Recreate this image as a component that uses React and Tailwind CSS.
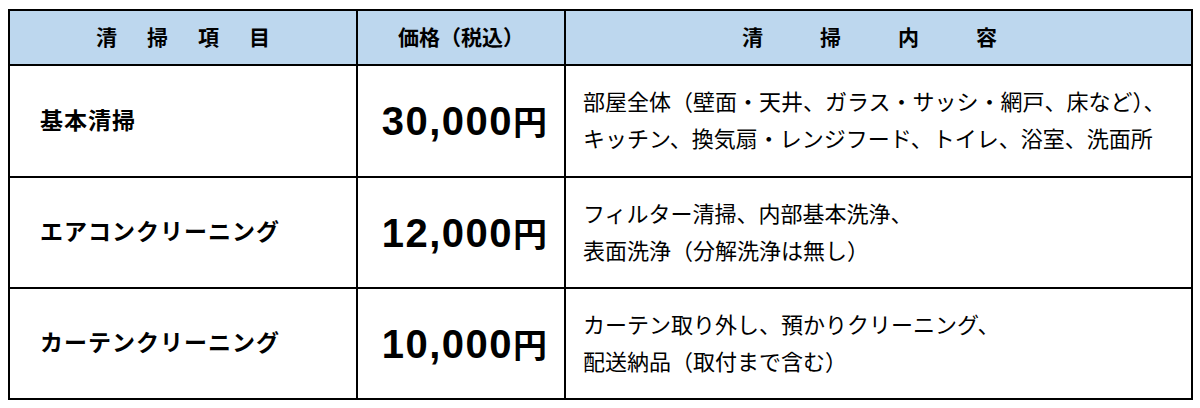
const rows = [
  {
    name: "基本清掃",
    price: "30,000",
    lines: ["部屋全体（壁面・天井、ガラス・サッシ・網戸、床など）、", "キッチン、換気扇・レンジフード、トイレ、浴室、洗面所"],
    h: "h-[112px]",
  },
  {
    name: "エアコンクリーニング",
    price: "12,000",
    lines: ["フィルター清掃、内部基本洗浄、", "表面洗浄（分解洗浄は無し）"],
    h: "h-[111px]",
  },
  {
    name: "カーテンクリーニング",
    price: "10,000",
    lines: ["カーテン取り外し、預かりクリーニング、", "配送納品（取付まで含む）"],
    h: "h-[111px]",
  },
];

const Spaced = ({ chars, gap }) => (
  <div className={`flex justify-center ${gap}`}>
    {chars.split("").map((c, i) => (
      <span key={i}>{c}</span>
    ))}
  </div>
);

const App = () => {
  return (
    <div className="w-[1200px] h-[408px] bg-white pt-[9px] pl-[8px]">
      <table
        className="w-[1183px] table-fixed border-collapse border-2 border-black text-black"
        style={{ fontFamily: '"Liberation Sans", "Noto Sans CJK JP", sans-serif' }}
      >
        <colgroup>
          <col className="w-[348px]" />
          <col className="w-[208px]" />
          <col className="w-[627px]" />
        </colgroup>
        <thead>
          <tr className="h-[55px] bg-[#bdd7ee] text-[21px] font-bold">
            <th className="border-2 border-black p-0 font-bold">
              <Spaced chars="清掃項目" gap="gap-[30px]" />
            </th>
            <th className="border-2 border-black p-0 font-bold">価格（税込）</th>
            <th className="border-2 border-black p-0 font-bold">
              <div className="pr-[18px]">
                <Spaced chars="清掃内容" gap="gap-[57px]" />
              </div>
            </th>
          </tr>
        </thead>
        <tbody>
          {rows.map((r) => (
            <tr key={r.name} className={r.h}>
              <td className="border-2 border-black pl-[30px] text-[23px] font-bold tracking-[1px]">{r.name}</td>
              <td className="border-2 border-black pr-[17px] text-right font-bold">
                <span className="text-[40px] tracking-[1.5px]">{r.price}</span>
                <span className="text-[34px]">円</span>
              </td>
              <td className="border-2 border-black pl-[17px] pb-[4px] text-[22px] leading-[37px]" style={{ fontFamily: '"Noto Sans CJK JP", sans-serif' }}>
                {r.lines.map((l) => (
                  <div key={l}>{l}</div>
                ))}
              </td>
            </tr>
          ))}
        </tbody>
      </table>
    </div>
  );
};

export default App;
